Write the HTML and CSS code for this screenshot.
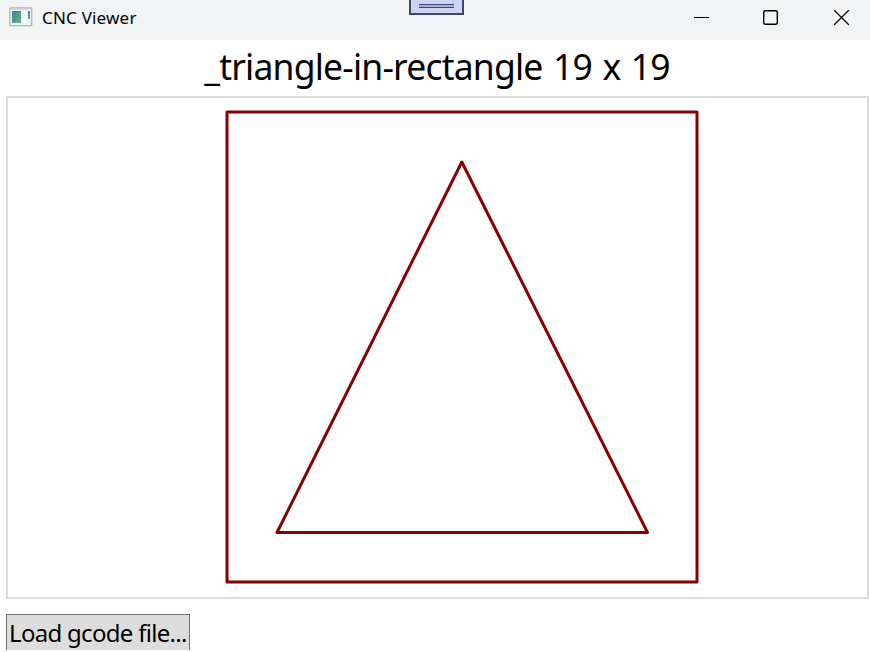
FILE: index.html
```html
<!DOCTYPE html>
<html lang="en">
<head>
<meta charset="utf-8">
<title>CNC Viewer</title>
<link rel="stylesheet" href="styles.css">
</head>
<body>
<div class="window">
  <header class="titlebar">
    <svg class="app-icon" width="24" height="20" viewBox="0 0 24 20">
      <defs><linearGradient id="g" x1="0" y1="0" x2="1" y2="1"><stop offset="0" stop-color="#3f7fa0"/><stop offset="1" stop-color="#62b592"/></linearGradient></defs>
      <rect x=".8" y=".8" width="22" height="17.8" rx="1" fill="#f0f1f3" stroke="#b4b3bb" stroke-width="1.3"/>
      <path d="M1.5 2h20.500" stroke="#c9c8ce" stroke-width="1"/>
      <rect x="3" y="4" width="9" height="12" fill="url(#g)"/>
      <rect x="13" y="4" width="5" height="12" fill="#fff"/>
      <rect x="19" y="4" width="2" height="8" fill="url(#g)"/>
    </svg>
    <span class="app-name">CNC Viewer</span>
    <div class="controls">
      <svg width="70" height="40" viewBox="0 0 70 40"><path d="M14 17.500h15" stroke="#000" fill="none"/></svg>
      <svg width="70" height="40" viewBox="0 0 70 40"><rect x="13.700" y="10.700" width="13.600" height="13.600" rx="1.500" stroke="#000" stroke-width="1.400" fill="none"/></svg>
      <svg width="50" height="40" viewBox="0 0 50 40"><path d="M14.500 10.500l14 14M28.500 10.500l-14 14" stroke="#111" stroke-width="1.400" fill="none" stroke-linecap="round"/></svg>
    </div>
    <div class="handle"><div class="grip"></div></div>
  </header>
  <h1 class="heading">_triangle-in-rectangle 19 x 19</h1>
  <main class="canvas">
    <svg width="859" height="499" viewBox="8 98 859 499" fill="none" stroke="#850000" stroke-width="3" stroke-linejoin="round">
      <rect x="227" y="112" width="470" height="470"/>
      <path d="M277 532.500L461.800 162L647.500 532.500Z"/>
    </svg>
  </main>
  <button class="load">Load gcode file...</button>
</div>
</body>
</html>
```
FILE: styles.css
```css
* { box-sizing: border-box; }
body {
  margin: 0;
  background: #fff;
  color: #000;
  font-family: "Noto Sans", "Open Sans", sans-serif;
}
.window {
  height: 650px;
  overflow: hidden;
  display: flex;
  flex-direction: column;
}
.titlebar {
  position: relative;
  flex: none;
  height: 40px;
  display: flex;
  background: #f1f3f5;
}
.app-icon { margin: 7px 0 0 9px; }
.app-name {
  margin-left: 9px;
  font-size: 17px;
  line-height: 36px;
  letter-spacing: 0.2px;
  white-space: nowrap;
}
.controls { display: flex; margin-left: auto; }
.controls svg { display: block; }
.handle {
  position: absolute;
  left: 409px;
  top: 0;
  width: 55px;
  height: 15px;
  padding: 4px 8px;
  background: #cbd5f2;
  border: 2px solid #3e4673;
  border-top: 0;
}
.grip {
  height: 4px;
  background: #a9b1d6;
  border-top: 1px solid #3e4673;
  border-bottom: 1px solid #3e4673;
}
.heading {
  flex: none;
  height: 56px;
  margin: 0 0 0 4px;
  font-size: 35.5px;
  font-weight: 400;
  line-height: 52px;
  letter-spacing: -0.8px;
  word-spacing: 2px;
  text-align: center;
  white-space: nowrap;
}
.canvas {
  flex: none;
  width: 863px;
  height: 503px;
  margin-left: 6px;
  border: 2px solid #dbdbdb;
}
.canvas svg { display: block; }
.load {
  flex: none;
  align-self: flex-start;
  width: 184px;
  height: 40px;
  margin: 15px 0 0 6px;
  padding: 0 0 2px 2px;
  border: 1px solid #707070;
  background: #ddd;
  color: #000;
  font: 24px/36px "Noto Sans", "Open Sans", sans-serif;
  letter-spacing: -0.7px;
  text-align: left;
  white-space: nowrap;
}
```
